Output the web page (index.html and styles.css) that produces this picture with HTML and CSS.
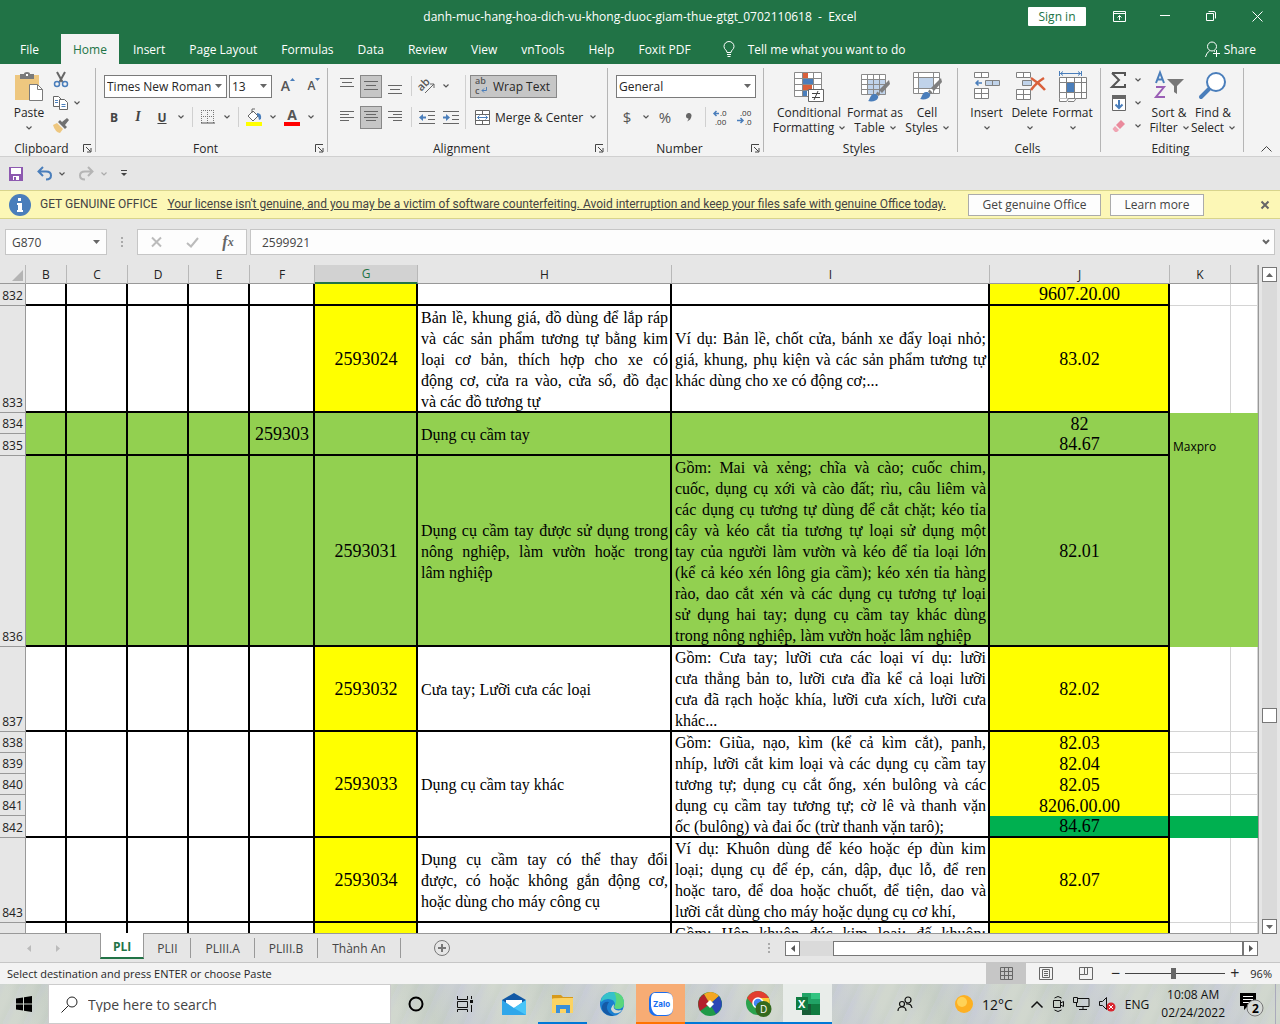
FILE: index.html
```html
<!DOCTYPE html>
<html lang="vi">
<head>
<meta charset="utf-8">
<title>danh-muc-hang-hoa-dich-vu-khong-duoc-giam-thue-gtgt_0702110618 - Excel</title>
<link rel="stylesheet" href="styles.css">
</head>
<body>
<svg class="defs" aria-hidden="true">
  <symbol id="chev" viewBox="0 0 6 4"><path d="M.5 .5 3 3 5.500 .5" fill="none" stroke="#555" stroke-width="1.200"/></symbol>
  <symbol id="tri" viewBox="0 0 7 4"><path d="M0 0H7L3.500 4z" fill="#666"/></symbol>
  <symbol id="launch" viewBox="0 0 9 9"><path d="M.5 8V.5H8M3 3l4.500 4.500M8 4V8H4" fill="none" stroke="#444"/></symbol>
  <symbol id="brush" viewBox="0 0 24 24"><path d="M22 1 12 11l3 3 8-9z" fill="#7f7f7f"/><path d="M10.500 12.500l3 3-2 1.500-2.500-2.500z" fill="#7f7f7f"/><path d="M1 22c2-1 2-7 6-7 3 0 5 2 4 4-1 3-6 4-10 3z" fill="#4a7ebb"/></symbol>
</svg>

<header class="titlebar">
  <span></span>
  <h1>danh-muc-hang-hoa-dich-vu-khong-duoc-giam-thue-gtgt_0702110618&nbsp; -&nbsp; Excel</h1>
  <div class="window-controls">
    <button class="signin">Sign in</button>
    <button class="win" aria-label="Ribbon display options"><svg width="13" height="11" fill="none" stroke="#fff"><path d="M.5 .5h12v10H.5zM.5 2.500h12M6.500 9V4.500M4.500 6.500l2-2 2 2"/></svg></button>
    <button class="win" aria-label="Minimize"><svg width="10" height="10" stroke="#fff"><path d="M0 4.500h10"/></svg></button>
    <button class="win" aria-label="Restore"><svg width="10" height="10" fill="none" stroke="#fff"><path d="M.5 2.500h7v7h-7zM2.500 .5h5.500q1.500 0 1.500 1.500V7.500"/></svg></button>
    <button class="win" aria-label="Close"><svg width="11" height="11" stroke="#fff"><path d="M.5 .5l10 10M10.500 .5l-10 10"/></svg></button>
  </div>
</header>

<nav class="menu">
  <a href="#file" class="file">File</a>
  <a href="#home" class="active">Home</a>
  <a href="#insert">Insert</a>
  <a href="#layout">Page Layout</a>
  <a href="#formulas">Formulas</a>
  <a href="#data">Data</a>
  <a href="#review">Review</a>
  <a href="#view">View</a>
  <a href="#vntools">vnTools</a>
  <a href="#help">Help</a>
  <a href="#foxit">Foxit PDF</a>
  <a href="#tell" class="tell"><svg width="12" height="17" fill="none" stroke="#fff"><path d="M4 11.500C4 9 1 8.500 1 5.500a5 5 0 0 1 10 0C11 8.500 8 9 8 11.500zM4 13.500h4M4.500 15.500h3"/></svg>Tell me what you want to do</a>
  <a href="#share" class="share"><svg width="15" height="16" fill="none" stroke="#fff"><circle cx="7" cy="5.500" r="4.500"/><path d="M.5 16q1-4.500 4-6M9 10l1 .5M8 12.500h7M11.500 9v7"/></svg>Share</a>
</nav>

<section class="ribbon">
  <div class="group g-clip">
    <div class="tools">
      <button class="big paste">
        <svg width="30" height="32"><rect x="1" y="4" width="24" height="25" fill="#eec77f"/><path d="M6 3h4q0-2 3-2t3 2h4v5H6z" fill="#7a7a7a"/><rect x="12" y="3" width="2" height="2" fill="#fff"/><path d="M15.500 13.500h8l5 5v11h-13z" fill="#fff" stroke="#7a7a7a"/><path d="M23.500 13.500v5h5" fill="none" stroke="#7a7a7a"/></svg>
        <span>Paste</span><svg class="chev"><use href="#chev"/></svg>
      </button>
      <div class="stack">
        <button class="tool" aria-label="Cut"><svg width="16" height="16" fill="none"><path d="M4 0l5.500 10M12 0L6.500 10" stroke="#666" stroke-width="2"/><circle cx="4" cy="12" r="2.500" stroke="#4a7ebb" stroke-width="1.500"/><circle cx="12" cy="12" r="2.500" stroke="#4a7ebb" stroke-width="1.500"/></svg></button>
        <div class="pair"><button class="tool" aria-label="Copy"><svg width="16" height="14" fill="#fff" stroke="#666"><path d="M.5 .5h5l3 3v7h-8z"/><path d="M6.500 3.500h5l3 3v7h-8z"/><path d="M2 4.500h3M2 6.500h3M8.500 8.500h4M8.500 10.500h4" stroke="#4a7ebb"/></svg></button><svg class="chev"><use href="#chev"/></svg></div>
        <button class="tool" aria-label="Format painter"><svg width="16" height="15"><path d="M0 7l4-2 6 6-3 4q-5-1-7-8z" fill="#eec77f"/><path d="M5 4l2-2 7 7-2 2zM9 4l5-4 2 2-4 5z" fill="#707070"/></svg></button>
      </div>
    </div>
    <div class="caption"><span>Clipboard</span><svg class="launch"><use href="#launch"/></svg></div>
  </div>

  <div class="group g-font">
    <div class="tools rows">
      <div class="row">
        <label class="combo w-font"><select aria-label="Font"><option>Times New Roman</option></select><svg class="tri"><use href="#tri"/></svg></label>
        <label class="combo w-size"><select aria-label="Font size"><option>13</option></select><svg class="tri"><use href="#tri"/></svg></label>
        <button class="tool grow-a" aria-label="Increase font size">A<svg width="5" height="3"><path d="M0 3L2.500 0 5 3z" fill="#4a7ebb"/></svg></button>
        <button class="tool shrink-a" aria-label="Decrease font size">A<svg width="5" height="3"><path d="M0 0L2.500 3 5 0z" fill="#4a7ebb"/></svg></button>
      </div>
      <div class="row">
        <button class="tool b">B</button><button class="tool i">I</button><button class="tool u">U</button><svg class="chev"><use href="#chev"/></svg>
        <i class="sep"></i>
        <button class="tool" aria-label="Borders"><svg width="14" height="14" fill="none" stroke="#777"><path d="M.5 0v13M6.500 0v13M12.500 0v13M0 .5h13M0 6.500h13" stroke-dasharray="1 1"/><path d="M0 13h14" stroke="#555"/></svg></button><svg class="chev"><use href="#chev"/></svg>
        <i class="sep"></i>
        <button class="tool" aria-label="Fill colour"><svg width="16" height="17"><path d="M2 7l5-5 5 5-5 5zM6 4V0h3" fill="#fff" stroke="#666"/><path d="M11 4q5 0 4 6l-2 1q0-3-2-5z" fill="#4a7ebb"/><path d="M0 13h16v4H0z" fill="#ff0"/></svg></button><svg class="chev"><use href="#chev"/></svg>
        <button class="tool fontcolor" aria-label="Font colour">A</button><svg class="chev"><use href="#chev"/></svg>
      </div>
    </div>
    <div class="caption"><span>Font</span><svg class="launch"><use href="#launch"/></svg></div>
  </div>

  <div class="group g-align">
    <div class="tools">
      <div class="rows">
        <div class="row">
          <button class="tool" aria-label="Top align"><svg width="14" height="16" stroke="#666"><path d="M0 .5h14M2 4.500h10M0 8.500h14"/></svg></button>
          <button class="tool on" aria-label="Middle align"><svg width="14" height="16" stroke="#666"><path d="M0 3.500h14M2 7.500h10M0 11.500h14"/></svg></button>
          <button class="tool" aria-label="Bottom align"><svg width="14" height="16" stroke="#666"><path d="M0 7.500h14M2 11.500h10M0 15.500h14"/></svg></button>
          <i class="sep"></i>
          <button class="tool" aria-label="Orientation"><svg width="18" height="16"><text x="0" y="10" transform="rotate(-45 6 8)" class="ab big-ab">ab</text><path d="M7 15l9-9M12 6h4v4" fill="none" stroke="#666"/></svg></button><svg class="chev"><use href="#chev"/></svg>
        </div>
        <div class="row">
          <button class="tool" aria-label="Align left"><svg width="14" height="12" stroke="#666"><path d="M0 .5h14M0 3.500h9M0 6.500h14M0 9.500h9"/></svg></button>
          <button class="tool on" aria-label="Center"><svg width="14" height="12" stroke="#666"><path d="M0 .5h14M2 3.500h10M0 6.500h14M2 9.500h10"/></svg></button>
          <button class="tool" aria-label="Align right"><svg width="14" height="12" stroke="#666"><path d="M0 .5h14M5 3.500h9M0 6.500h14M5 9.500h9"/></svg></button>
          <i class="sep"></i>
          <button class="tool" aria-label="Decrease indent"><svg width="16" height="13"><path d="M0 .5h16M9 4.500h7M9 8.500h7M0 12.500h16" stroke="#666"/><path d="M0 6.500L4 3v2.500h3v2H4V10z" fill="#4a7ebb"/></svg></button>
          <button class="tool" aria-label="Increase indent"><svg width="16" height="13"><path d="M0 .5h16M9 4.500h7M9 8.500h7M0 12.500h16" stroke="#666"/><path d="M7 6.500L3 3v2.500H0v2h3V10z" fill="#4a7ebb"/></svg></button>
        </div>
      </div>
      <i class="sep tall"></i>
      <div class="rows">
        <div class="row"><button class="wide on"><svg width="13" height="16"><text x="0" y="6" class="ab">ab</text><text x="0" y="16" class="ab">c</text><path d="M11.500 9v3.500H7M9 10.500l-2 2 2 2" fill="none" stroke="#4a7ebb"/></svg>Wrap Text</button></div>
        <div class="row"><button class="wide"><svg width="15" height="15" fill="#fff" stroke="#666"><path d="M.5 .5h14v14H.5zM.5 4.500h14M.5 10.500h14M7.500 .5v4M7.500 10.500v4"/><path d="M2.500 7.500h10M4.500 5.500l-2 2 2 2M10.500 5.500l2 2-2 2" stroke="#4a7ebb" fill="none"/></svg>Merge &amp; Center</button><svg class="chev"><use href="#chev"/></svg></div>
      </div>
    </div>
    <div class="caption"><span>Alignment</span><svg class="launch"><use href="#launch"/></svg></div>
  </div>

  <div class="group g-num">
    <div class="tools rows">
      <div class="row"><label class="combo w-num"><select aria-label="Number format"><option>General</option></select><svg class="tri"><use href="#tri"/></svg></label></div>
      <div class="row">
        <button class="tool sym">$</button><svg class="chev"><use href="#chev"/></svg>
        <button class="tool sym">%</button>
        <button class="tool comma" aria-label="Comma style"><svg width="6" height="9"><path d="M3 0a2.500 2.500 0 0 1 2.500 3Q5 7 1 8.500q1.500-1.500 1.500-3A2.500 2.500 0 0 1 3 0z" fill="#666"/></svg></button>
        <i class="sep"></i>
        <button class="tool" aria-label="Increase decimal"><svg width="16" height="14"><path d="M6 3.500H1M3.500 1L1 3.500 3.500 6" fill="none" stroke="#4a7ebb" stroke-width="1.500"/><text x="7" y="6" class="dec">.0</text><text x="2" y="15" class="dec">.00</text></svg></button>
        <button class="tool" aria-label="Decrease decimal"><svg width="16" height="14"><path d="M0 10.500h6M3.500 8L6 10.500 3.500 13" fill="none" stroke="#4a7ebb" stroke-width="1.500"/><text x="3" y="6" class="dec">.00</text><text x="8" y="15" class="dec">.0</text></svg></button>
      </div>
    </div>
    <div class="caption"><span>Number</span><svg class="launch"><use href="#launch"/></svg></div>
  </div>

  <div class="group g-styles">
    <div class="tools">
      <button class="big w-cf"><svg width="30" height="32"><path d="M.5 1.500h27v24H.5zM.5 7.500h27M.5 13.500h27M.5 19.500h27M8.500 1.500v24M19.500 1.500v24" fill="#fff" stroke="#8a8a8a"/><path d="M9 2h5v5H9zM9 14h9v5H9z" fill="#d9603b"/><path d="M9 8h10v5H9zM9 20h4v5H9z" fill="#4a7ebb"/><path d="M14.500 18.500h15v12h-15z" fill="#fff" stroke="#666"/><path d="M18 22.500h8M18 26.500h8M24 20l-4 9" stroke="#444"/></svg><span>Conditional</span><span>Formatting <svg class="chev"><use href="#chev"/></svg></span></button>
      <button class="big w-ft"><svg width="30" height="32"><path d="M1.500 3.500h24v20h-24z" fill="#fff"/><path d="M8 9h18v15H8z" fill="#c0d3ea"/><path d="M1.500 3.500h24v20h-24zM1.500 8.500h24M1.500 13.500h24M1.500 18.500h24M7.500 3.500v20M13.500 3.500v20M19.500 3.500v20" fill="none" stroke="#8a8a8a"/><use href="#brush" x="7" y="8" width="24" height="24"/></svg><span>Format as</span><span>Table <svg class="chev"><use href="#chev"/></svg></span></button>
      <button class="big w-cs"><svg width="30" height="32"><path d="M1.500 1.500h26v21h-26zM1.500 6.500h26M1.500 17.500h26M6.500 1.500v21M21.500 1.500v21" fill="#fff" stroke="#8a8a8a"/><path d="M7 7h14v10H7z" fill="#c0d3ea"/><use href="#brush" x="7" y="6" width="24" height="24"/></svg><span>Cell</span><span>Styles <svg class="chev"><use href="#chev"/></svg></span></button>
    </div>
    <div class="caption"><span>Styles</span></div>
  </div>

  <div class="group g-cells">
    <div class="tools">
      <button class="big"><svg width="28" height="32" fill="#fff" stroke="#808080"><path d="M1.500 1.500h14v5h-14zM8.500 1.500v5M1.500 17.500h14v10h-14zM1.500 22.500h14M8.500 17.500v10"/><path d="M12.500 9.500h14v5h-14zM19.500 9.500v5" fill="#c0d3ea"/><path d="M9 12H3M5.500 9.500L3 12l2.500 2.500" stroke="#4a7ebb" stroke-width="1.500" fill="none"/></svg><span>Insert</span><svg class="chev"><use href="#chev"/></svg></button>
      <button class="big"><svg width="30" height="32" fill="#fff" stroke="#808080"><path d="M1.500 1.500h14v5h-14zM8.500 1.500v5M1.500 18.500h14v10h-14zM1.500 23.500h14M8.500 18.500v10"/><path d="M7.500 9.500h9v5h-9z" fill="#c0d3ea"/><path d="M16 7q8 5 14 12M29 7q-8 5-13 12" stroke="#d9603b" stroke-width="2.500" fill="none"/></svg><span>Delete</span><svg class="chev"><use href="#chev"/></svg></button>
      <button class="big"><svg width="28" height="32" fill="#fff" stroke="#808080"><path d="M.5 0v5M22.500 0v5M1 2.500h21M4 .5l-2.500 2L4 4.500M19 .5l2.500 2-2.500 2" stroke="#4a7ebb" fill="none"/><path d="M.5 6.500h27v21H.5zM.5 11.500h27M.5 21.500h27M7.500 6.500v21M15.500 6.500v21M22.500 6.500v21"/><path d="M8 12h7v9H8z" fill="#4a7ebb" stroke="none"/><path d="M.5 27.500v3h7l2-3M9 30.500h6l2-3" /></svg><span>Format</span><svg class="chev"><use href="#chev"/></svg></button>
    </div>
    <div class="caption"><span>Cells</span></div>
  </div>

  <div class="group g-edit">
    <div class="tools">
      <div class="stack">
        <div class="pair"><button class="tool" aria-label="AutoSum"><svg width="16" height="16"><path d="M1 1h13v3M14 12v3H1l7-7-7-7" fill="none" stroke="#555" stroke-width="2"/></svg></button><svg class="chev"><use href="#chev"/></svg></div>
        <div class="pair"><button class="tool" aria-label="Fill"><svg width="15" height="16"><path d="M.5 .5h13v15H.5z" fill="#fff" stroke="#666"/><path d="M0 0h14v4H0z" fill="#666"/><path d="M7 5v8M3.500 9.500L7 13l3.500-3.500" fill="none" stroke="#4a7ebb" stroke-width="2"/></svg></button><svg class="chev"><use href="#chev"/></svg></div>
        <div class="pair"><button class="tool" aria-label="Clear"><svg width="14" height="14"><path d="M4 6l5-5 4 4-5 5z" fill="#ea8a9c"/><path d="M3 7l4 4-2 2H3L.5 10z" fill="#f0a5b3"/></svg></button><svg class="chev"><use href="#chev"/></svg></div>
      </div>
      <button class="big w-sort"><svg width="30" height="32"><path d="M2 12L6 1.500 10 12M3.500 8.500h5" fill="none" stroke="#4a7ebb" stroke-width="2"/><path d="M2 16h8L2 26h9" fill="none" stroke="#9a5fb5" stroke-width="2"/><path d="M13 8h17l-7 7v8l-3-2v-6z" fill="#777"/></svg><span>Sort &amp;</span><span>Filter <svg class="chev"><use href="#chev"/></svg></span></button>
      <button class="big w-find"><svg width="30" height="32"><path d="M12 17L3 26" stroke="#4a7ebb" stroke-width="4" stroke-linecap="round"/><circle cx="18" cy="11" r="9" fill="#fff" stroke="#4a7ebb" stroke-width="2"/></svg><span>Find &amp;</span><span>Select <svg class="chev"><use href="#chev"/></svg></span></button>
    </div>
    <div class="caption"><span>Editing</span></div>
  </div>
  <button class="collapse" aria-label="Collapse ribbon"><svg width="11" height="6"><path d="M.5 5.500l5-5 5 5" fill="none" stroke="#444"/></svg></button>
</section>

<div class="quick">
  <button aria-label="Save"><svg width="14" height="14"><path d="M0 0h14v14H0z" fill="#8d59b0"/><path d="M2 1h10v6H2zM4 9h6v4H4z" fill="#fff"/><path d="M5 10h2v3H5z" fill="#8d59b0"/></svg></button>
  <button aria-label="Undo"><svg width="15" height="13" fill="none" stroke="#4a7ebb" stroke-width="2"><path d="M6 0L1.500 4.500 6 9M2 4.500h7q5 0 5 4t-5 4"/></svg></button><svg class="chev"><use href="#chev"/></svg>
  <button aria-label="Redo"><svg width="15" height="13" fill="none" stroke="#b5b5b5" stroke-width="2"><path d="M9 0l4.500 4.500L9 9M13 4.500H6q-5 0-5 4t5 4"/></svg></button><svg class="chev dim"><use href="#chev"/></svg>
  <button aria-label="Customize"><svg width="6" height="7"><path d="M0 .5h6" stroke="#444"/><path d="M0 3h6L3 6z" fill="#444"/></svg></button>
</div>

<div class="notice">
  <svg width="22" height="22"><circle cx="11" cy="11" r="11" fill="#4a7ebb"/><path d="M9 9h4v7h1v2H8v-2h1v-5H8V9zM9 4h3v3H9z" fill="#fff"/></svg>
  <strong>GET GENUINE OFFICE</strong>
  <a href="#genuine">Your license isn't genuine, and you may be a victim of software counterfeiting. Avoid interruption and keep your files safe with genuine Office today.</a>
  <button class="get">Get genuine Office</button>
  <button class="learn">Learn more</button>
  <button class="dismiss" aria-label="Close message"><svg width="8" height="8" stroke="#666" stroke-width="2"><path d="M.5 .5l7 7M7.500 .5l-7 7"/></svg></button>
</div>

<div class="formula">
  <label class="name"><input value="G870" aria-label="Name box"><svg class="tri"><use href="#tri"/></svg></label>
  <svg class="grip" width="2" height="12"><path d="M1 1v10" stroke="#aaa" stroke-width="2" stroke-dasharray="2 2"/></svg>
  <div class="fx">
    <button aria-label="Cancel"><svg width="11" height="10" stroke="#bbb" stroke-width="2"><path d="M1 .5l9 9M10 .5l-9 9"/></svg></button>
    <button aria-label="Enter"><svg width="13" height="11" fill="none" stroke="#bbb" stroke-width="2"><path d="M1 6l4 3.500L12 1"/></svg></button>
    <button class="fn" aria-label="Insert function">f<small>x</small></button>
  </div>
  <label class="entry"><input value="2599921" aria-label="Formula"><svg width="8" height="6"><path d="M1 1l3 3 3-3" fill="none" stroke="#666" stroke-width="2"/></svg></label>
</div>

<main class="book">
  <div class="sheet">
    <table>
      <colgroup><col class="c-head"><col class="c-b"><col class="c-c"><col class="c-c"><col class="c-c"><col class="c-f"><col class="c-g"><col class="c-h"><col class="c-i"><col class="c-j"><col class="c-c"><col></colgroup>
      <thead><tr><th class="corner"><svg width="11" height="11"><path d="M11 0v11H0z" fill="#b4b4b4"/></svg></th><th>B</th><th>C</th><th>D</th><th>E</th><th>F</th><th class="sel">G</th><th>H</th><th>I</th><th>J</th><th>K</th><th></th></tr></thead>
      <tbody>
        <tr class="h22"><th>832</th><td></td><td></td><td></td><td></td><td></td><td class="y"></td><td></td><td></td><td class="y n">9607.20.00</td><td class="p"></td><td class="p"></td></tr>
        <tr class="h107"><th>833</th><td></td><td></td><td></td><td></td><td></td><td class="y n">2593024</td><td><span>Bản lề, khung giá, đồ dùng để lắp ráp </span><span>và các sản phẩm tương tự bằng kim </span><span>loại cơ bản, thích hợp cho xe có </span><span>động cơ, cửa ra vào, cửa sổ, đồ đạc </span><span>và các đồ tương tự</span></td><td><span>Ví dụ: Bản lề, chốt cửa, bánh xe đẩy loại nhỏ; </span><span>giá, khung, phụ kiện và các sản phẩm tương tự </span><span>khác dùng cho xe có động cơ;...</span></td><td class="y n">83.02</td><td class="p nb"></td><td class="p nb"></td></tr>
        <tr class="h21 green"><th>834</th><td rowspan="2"></td><td rowspan="2"></td><td rowspan="2"></td><td rowspan="2"></td><td rowspan="2" class="n">259303</td><td rowspan="2"></td><td rowspan="2"><span>Dụng cụ cầm tay</span></td><td rowspan="2"></td><td class="n nb">82</td><td class="f"></td><td class="f"></td></tr>
        <tr class="h22 green"><th>835</th><td class="n">84.67</td><td class="f ui">Maxpro</td><td class="f"></td></tr>
        <tr class="h191 green"><th>836</th><td></td><td></td><td></td><td></td><td></td><td class="n">2593031</td><td><span>Dụng cụ cầm tay được sử dụng trong </span><span>nông nghiệp, làm vườn hoặc trong </span><span>lâm nghiệp</span></td><td><span>Gồm: Mai và xẻng; chĩa và cào; cuốc chim, </span><span>cuốc, dụng cụ xới và cào đất; rìu, câu liêm và </span><span>các dụng cụ tương tự dùng để cắt chặt; kéo tỉa </span><span>cây và kéo cắt tỉa tương tự loại sử dụng một </span><span>tay của người làm vườn và kéo để tỉa loại lớn </span><span>(kể cả kéo xén lông gia cầm); kéo xén tỉa hàng </span><span>rào, dao cắt xén và các dụng cụ tương tự loại </span><span>sử dụng hai tay; dụng cụ cầm tay khác dùng </span><span>trong nông nghiệp, làm vườn hoặc lâm nghiệp</span></td><td class="n">82.01</td><td class="f"></td><td class="f"></td></tr>
        <tr class="h85"><th>837</th><td></td><td></td><td></td><td></td><td></td><td class="y n">2593032</td><td><span>Cưa tay; Lưỡi cưa các loại</span></td><td><span>Gồm: Cưa tay; lưỡi cưa các loại ví dụ: lưỡi </span><span>cưa thẳng bản to, lưỡi cưa đĩa kể cả loại lưỡi </span><span>cưa đã rạch hoặc khía, lưỡi cưa xích, lưỡi cưa </span><span>khác...</span></td><td class="y n">82.02</td><td class="p"></td><td class="p"></td></tr>
        <tr class="h21"><th>838</th><td rowspan="5"></td><td rowspan="5"></td><td rowspan="5"></td><td rowspan="5"></td><td rowspan="5"></td><td rowspan="5" class="y n">2593033</td><td rowspan="5"><span>Dụng cụ cầm tay khác</span></td><td rowspan="5"><span>Gồm: Giũa, nạo, kìm (kể cả kìm cắt), panh, </span><span>nhíp, lưỡi cắt kim loại và các dụng cụ cầm tay </span><span>tương tự; dụng cụ cắt ống, xén bulông và các </span><span>dụng cụ cầm tay tương tự; cờ lê và thanh vặn </span><span>ốc (bulông) và đai ốc (trừ thanh vặn tarô);</span></td><td class="y n nb">82.03</td><td class="p"></td><td class="p"></td></tr>
        <tr class="h21"><th>839</th><td class="y n nb">82.04</td><td class="p"></td><td class="p"></td></tr>
        <tr class="h21"><th>840</th><td class="y n nb">82.05</td><td class="p"></td><td class="p"></td></tr>
        <tr class="h21"><th>841</th><td class="y n nb">8206.00.00</td><td class="p nb"></td><td class="p nb"></td></tr>
        <tr class="h22 dark"><th>842</th><td class="n">84.67</td><td class="f"></td><td class="f"></td></tr>
        <tr class="h85"><th>843</th><td></td><td></td><td></td><td></td><td></td><td class="y n">2593034</td><td><span>Dụng cụ cầm tay có thể thay đổi </span><span>được, có hoặc không gắn động cơ, </span><span>hoặc dùng cho máy công cụ</span></td><td><span>Ví dụ: Khuôn dùng để kéo hoặc ép đùn kim </span><span>loại; dụng cụ để ép, cán, dập, đục lỗ, để ren </span><span>hoặc taro, để doa hoặc chuốt, để tiện, dao và </span><span>lưỡi cắt dùng cho máy hoặc dụng cụ cơ khí,</span></td><td class="y n">82.07</td><td class="p"></td><td class="p"></td></tr>
        <tr class="h22"><th></th><td></td><td></td><td></td><td></td><td></td><td class="y"></td><td></td><td class="spread">Gồm: Hộp khuôn đúc kim loại; đế khuôn;</td><td class="y"></td><td class="p"></td><td class="p"></td></tr>
      </tbody>
    </table>
  </div>
  <div class="vscroll">
    <button aria-label="Scroll up"><svg width="7" height="4"><path d="M0 4L3.500 0 7 4z" fill="#666"/></svg></button>
    <div class="track"><span class="thumb"></span></div>
    <button aria-label="Scroll down"><svg width="7" height="4"><path d="M0 0l3.500 4L7 0z" fill="#666"/></svg></button>
  </div>
</main>

<div class="sheets">
  <div class="arrows"><svg width="4" height="7"><path d="M4 0v7L0 3.500z" fill="#bbb"/></svg><svg width="4" height="7"><path d="M0 0v7l4-3.500z" fill="#bbb"/></svg></div>
  <nav class="tabs">
    <a href="#pli" class="current">PLI</a><a href="#plii">PLII</a><a href="#pliiia">PLIII.A</a><a href="#pliiib">PLIII.B</a><a href="#ta">Thành An</a>
  </nav>
  <button class="add" aria-label="New sheet"><svg width="16" height="16" fill="none" stroke="#777"><circle cx="8" cy="8" r="7.500"/><path d="M4 8h8M8 4v8" stroke-width="2"/></svg></button>
  <svg class="grip" width="2" height="12"><path d="M1 1v10" stroke="#aaa" stroke-width="2" stroke-dasharray="2 2"/></svg>
  <div class="hscroll">
    <button aria-label="Scroll left"><svg width="4" height="7"><path d="M4 0v7L0 3.500z" fill="#555"/></svg></button>
    <div class="track"><span class="thumb"></span></div>
    <button aria-label="Scroll right"><svg width="4" height="7"><path d="M0 0v7l4-3.500z" fill="#555"/></svg></button>
  </div>
</div>

<footer class="status">
  <span class="msg">Select destination and press ENTER or choose Paste</span>
  <button class="on" aria-label="Normal view"><svg width="13" height="13" fill="none" stroke="#666"><path d="M.5 .5h12v12H.5zM.5 4.500h12M.5 8.500h12M4.500 .5v12M8.500 .5v12"/></svg></button>
  <button aria-label="Page layout view"><svg width="14" height="13" fill="none" stroke="#666"><path d="M.5 .5h13v12H.5zM3.500 2.500h7v8h-7zM5 4.500h4M5 6.500h4M5 8.500h4"/></svg></button>
  <button aria-label="Page break view"><svg width="14" height="13" fill="none" stroke="#666"><path d="M.5 .5h13v12H.5zM5.500 .5v7h-5M8.500 .5v7h-3"/></svg></button>
  <div class="zoom"><span>−</span><input type="range" min="0" max="100" value="48" aria-label="Zoom"><span>+</span></div>
  <output>96%</output>
</footer>

<div class="taskbar">
  <button class="start" aria-label="Start"><svg width="16" height="16"><path d="M0 2.500l7-1v6H0zM8 1.300L16 0v7.500H8zM0 8.500h7v6l-7-1zM8 8.500h8V16l-8-1.300z"/></svg></button>
  <label class="search"><svg width="17" height="17" fill="none" stroke="#222"><circle cx="11" cy="6" r="5"/><path d="M7.500 9.500L.5 16.500"/></svg><input placeholder="Type here to search" aria-label="Search"></label>
  <div class="apps">
    <button aria-label="Cortana"><svg width="16" height="16"><circle cx="8" cy="8" r="6.500" fill="none" stroke="#000" stroke-width="2"/></svg></button>
    <button aria-label="Task view"><svg width="16" height="16" fill="none" stroke="#111"><path d="M.5 0v3.500h10V0M.5 5.500h10v6H.5zM.5 16v-2.500h10V16M14.500 0v3M14.500 9v7"/><path d="M13 4h3v3h-3z" fill="#111" stroke="none"/></svg></button>
    <button aria-label="Mail"><svg width="24" height="24"><path d="M0 8L12 1l12 7v4H0z" fill="#1259a5"/><path d="M4 8h16v8H4z" fill="#fff"/><path d="M0 8l12 8L24 8v15H0z" fill="#2fa7ea"/><path d="M24 8v15L12 16z" fill="#49c5f8"/></svg></button>
    <button class="run" aria-label="File Explorer"><svg width="22" height="20"><path d="M0 1h9l2 2h10v16H0z" fill="#d79a1b"/><path d="M0 5q0-1 10-1h11v15H0z" fill="#fcd363"/><path d="M4 19v-8h14v8h-4v-4H8v4z" fill="#3a8fd9"/></svg></button>
    <button aria-label="Edge"><svg width="24" height="24"><circle cx="12" cy="12" r="12" fill="#1b7fd0"/><path d="M1 8Q4 0 12 0q11 0 12 11 0 6-7 6-4-1-2-4 0-6-7-6-4 0-7 3z" fill="#36c2c9"/><path d="M14 0q10 2 10 11 0 6-7 6-4-1-2-4 3-5-1-13z" fill="#5bd67c"/><path d="M9 10q-6 8 5 14-13-1-12-10 2-5 7-4z" fill="#155aa6"/><path d="M14 12q-2 8 8 6-3 4-8 3-6-4 0-9z" fill="#cfd6d2"/></svg></button>
    <button class="alert" aria-label="Zalo"><svg width="24" height="24"><rect width="24" height="24" rx="7" fill="#1a6ef0"/><path d="M5 1h13q6 0 6 7v8q0 7-7 7H8Q3 21 2 14V7q0-5 3-6z" fill="#fff"/><text x="4" y="15" class="zalo">Zalo</text></svg></button>
    <button class="run" aria-label="Viewer"><svg width="24" height="24"><circle cx="12" cy="12" r="12" fill="#1f9a48"/><path d="M12 12L2 19Q-3 8 6 2z" fill="#b3202c"/><path d="M12 12L6 2q8-5 15 2z" fill="#f5a623"/><path d="M12 12l9-8q7 10-3 18z" fill="#2b46b5"/><path d="M12 8l4 4-4 4-4-4z" fill="#fff"/></svg></button>
    <button class="run" aria-label="Chrome"><svg width="26" height="26"><circle cx="12" cy="12" r="12" fill="#2ba24c"/><path d="M1 7Q5 0 12 0t11 7H12l-4 8z" fill="#e23e31"/><path d="M23 7q3 10-5 16l-6-6 3-10z" fill="#fcc934"/><circle cx="12" cy="12" r="5" fill="#4285f4" stroke="#fff" stroke-width="1.500"/><circle cx="17.500" cy="18" r="8" fill="#33691e"/><text x="14" y="22" class="dot">D</text></svg></button>
    <button class="run open" aria-label="Excel"><svg width="24" height="22"><path d="M6 0h18v22H6z" fill="#21a366"/><path d="M15 0h9v6h-9z" fill="#33c481"/><path d="M15 11h9v11H6v-5h9z" fill="#107c41"/><path d="M6 11h9v11H6z" fill="#185c37"/><path d="M0 4h12v13H0z" fill="#107c41"/><text x="2" y="15" class="xl">X</text></svg></button>
  </div>
  <div class="tray">
    <svg class="people" width="16" height="16" fill="none" stroke="#111" stroke-width="1.200"><circle cx="11" cy="4" r="3"/><circle cx="5" cy="8" r="2.500"/><path d="M1 15q0-4 4-4t4 4M9 8q5-1 6 4"/></svg>
    <svg width="18" height="18"><circle cx="9" cy="9" r="9" fill="#fdb022"/><circle cx="7" cy="7" r="5" fill="#ffd257"/></svg>
    <span class="temp">12°C</span>
    <svg width="12" height="7"><path d="M.5 6.500l5.500-5.500 5.500 5.500" fill="none" stroke="#111" stroke-width="1.500"/></svg>
    <svg width="12" height="16" fill="none" stroke="#111"><path d="M2.500 2Q6-1 9.500 2M2.500 14q3.500 3 7 0M1.500 4.500h7v7h-7zM8.500 7l3-1.500v5L8.500 9"/></svg>
    <svg width="17" height="14" fill="none" stroke="#111"><path d="M5 1.500h11v8H3.500V6M10 9.500v3M6 12.500h8M.5 .5h4v5h-4z"/></svg>
    <svg width="17" height="16"><path d="M.5 5.500h3l4-4v12l-4-4h-3z" fill="none" stroke="#111"/><circle cx="12" cy="11" r="4.500" fill="#d9252f"/><path d="M10 9l4 4M14 9l-4 4" stroke="#fff"/></svg>
    <span>ENG</span>
    <time>10:08 AM<br>02/24/2022</time>
    <svg class="note" width="24" height="24"><path d="M0 1h16v13H8l-4 4v-4H0z"/><path d="M3 4.500h10M3 7.500h10M3 10.500h6" stroke="#fff"/><circle cx="15" cy="16" r="8" fill="#d5d9d6" stroke="#777"/><text x="12" y="21" class="count">2</text></svg>
  </div>
</div>
</body>
</html>
```
FILE: styles.css
```css
* { box-sizing: border-box; }
body {
  margin: 0;
  height: 100vh;
  display: flex;
  flex-direction: column;
  overflow: hidden;
  background: #e6e6e6;
  color: #262626;
  font: 12px/15px "Open Sans", "Noto Sans", sans-serif;
}
.defs { position: absolute; width: 0; height: 0; }
button, input, select { font: inherit; color: inherit; margin: 0; padding: 0; border: 0; background: none; }
button { display: flex; align-items: center; justify-content: center; flex: none; white-space: nowrap; }
a { color: inherit; text-decoration: none; white-space: nowrap; }
svg { flex: none; display: block; overflow: visible; }
.chev { width: 6px; height: 4px; }
.dim { opacity: .4; }
.tri { width: 7px; height: 4px; }

/* Title and menu */
.titlebar { flex: none; display: grid; grid-template-columns: 1fr auto 1fr; height: 32px; background: #217346; color: #fff; align-items: center; }
.titlebar h1 { margin: 0; font-size: 12px; font-weight: 400; }
.window-controls { display: flex; justify-content: flex-end; align-items: center; }
.signin { width: 58px; height: 19px; margin-right: 10px; background: #fff; color: #217346; border-radius: 1px; }
.win { width: 46px; height: 30px; }
.menu { flex: none; display: flex; height: 32px; padding: 2px 24px 0 0; background: #217346; color: #fff; }
.menu a { display: flex; align-items: center; padding: 0 12px; }
.menu .file { padding: 0 22px 0 20px; }
.menu .active { margin-right: 2px; background: #f3f3f3; color: #217346; }
.menu .tell { gap: 13px; padding: 0 20px; }
.menu .share { margin-left: auto; padding: 0; gap: 4px; }

/* Ribbon */
.ribbon { flex: none; display: flex; height: 93px; padding: 4px 0; background: #f3f3f3; border-bottom: 1px solid #d0d0d0; }
.group { flex: none; display: flex; flex-direction: column; border-right: 1px solid #b5b5b5; }
.tools { flex: none; display: flex; height: 72px; }
.rows { display: flex; flex-direction: column; gap: 7px; padding-top: 6px; }
.row { display: flex; align-items: center; height: 24px; }
.caption { flex: none; display: flex; align-items: center; height: 16px; padding-right: 3px; }
.caption span { flex: 1; text-align: center; }
.launch { width: 9px; height: 9px; }
.tool { width: 24px; height: 23px; }
.on { background: #c6c6c6; outline: 1px solid #888; outline-offset: -1px; }
.tool.on { width: 22px; margin: 0 1px; }
.row .chev, .pair .chev { margin: 0 4px; }
.sep { width: 1px; height: 20px; margin: 0 3px 0 4px; background: #d0d0d0; }
.sep.tall { height: 54px; margin: 7px 4px 0 2px; }
.big { flex-direction: column; justify-content: flex-start; padding-top: 3px; height: 72px; }
.big > svg:first-child { margin-bottom: 2px; }
.big > .chev { margin-top: 6px; }
.big span { display: flex; align-items: center; gap: 5px; height: 15px; }
.stack { display: flex; flex-direction: column; }
.pair { display: flex; align-items: center; }
.g-clip { width: 96px; }
.g-font { width: 232px; }
.g-font .tools { padding-left: 8px; }
.g-align { width: 280px; }
.g-align .tools { padding-left: 7px; }
.g-num { width: 156px; }
.g-num .tools { padding-left: 7px; }
.g-styles { width: 194px; }
.g-cells { width: 143px; }
.g-edit { width: 143px; }
.paste { width: 46px; margin-left: 6px; }
.g-clip .tool { width: 18px; }
.combo { display: grid; align-items: center; height: 23px; margin-right: 2px; background: #fff; border: 1px solid #7a7a7a; }
.combo > *, .name > *, .entry > * { grid-area: 1 / 1; }
.combo select { appearance: none; width: 100%; padding-left: 2px; }
.combo .tri { justify-self: end; margin-right: 4px; pointer-events: none; }
.w-font { width: 123px; }
.w-size { width: 43px; }
.w-num { width: 140px; margin-left: 1px; }
.grow-a, .shrink-a { align-items: flex-start; padding-top: 3px; font-weight: 600; color: #555; }
.grow-a { font-size: 14px; width: 28px; }
.g-font .b { font-weight: 700; margin-left: -2px; color: #444; }
.i { font: italic bold 14px "Liberation Serif", serif; color: #444; }
.u { font-weight: 700; text-decoration: underline; color: #444; }
.fontcolor { width: 16px; height: 18px; margin: 0 4px; border-bottom: 4px solid red; font-weight: 700; font-size: 14px; color: #555; line-height: 14px; }
.wide { height: 23px; padding: 0 7px 0 5px; gap: 5px; }
.wide + .chev { margin: 0; }
.sym { font-size: 15px; color: #555; }
.ab { font: 600 9px "Open Sans", sans-serif; fill: #555; }
.big-ab { font-size: 11px; }
.dec { font: 8px "Open Sans", sans-serif; fill: #333; }
.w-cf { width: 78px; margin-left: 6px; }
.w-ft { width: 54px; }
.w-cs { width: 50px; }
.g-cells .big { width: 43px; }
.g-cells .tools { padding-left: 7px; }
.g-edit .stack { margin-left: 6px; }
.w-sort { width: 44px; margin-left: 2px; }
.w-find { width: 44px; }
.collapse { align-self: flex-end; margin: 0 8px 0 auto; }

/* Quick access */
.quick { flex: none; display: flex; align-items: center; height: 33px; padding-left: 9px; gap: 7px; }
.quick button:nth-of-type(n+2) { margin-left: 7px; }

/* Licence notice */
.notice { flex: none; display: flex; align-items: center; height: 29px; padding: 0 11px 0 9px; background: #fcf7b6; border: solid #d8d48c; border-width: 1px 0; color: #444; }
.notice strong { font-weight: 400; font-family: Roboto, sans-serif; margin: 0 10px 0 9px; white-space: nowrap; }
.notice a { flex: none; font-family: Roboto, sans-serif; text-decoration: underline; }
.notice .get, .notice .learn { height: 22px; background: #fdfdfd; border: 1px solid #ababab; }
.notice .get { width: 133px; margin-left: auto; }
.notice .learn { width: 94px; margin: 0 57px 0 9px; }

/* Formula bar */
.formula { flex: none; display: flex; align-items: center; height: 46px; padding: 0 5px; color: #444; }
.name, .fx, .entry { height: 26px; background: #fdfdfd; border: 1px solid #c6c6c6; }
.name, .entry { display: grid; align-items: center; }
.name { width: 102px; }
.name input { width: 100%; padding-left: 6px; }
.name .tri { justify-self: end; margin-right: 6px; }
.formula .grip { margin: 0 14px; }
.fx { display: flex; width: 110px; margin-right: 3px; }
.fx button { flex: 1; }
.fn { font: italic bold 16px "Liberation Serif", serif; color: #666; }
.fn small { font-size: 12px; }
.entry { flex: 1; }
.entry input { width: 100%; padding-left: 11px; }
.entry svg { justify-self: end; margin-right: 4px; }

/* Worksheet */
.book { flex: 1; min-height: 0; display: flex; }
.sheet { flex: 1; min-width: 0; overflow: hidden; background: #fff; border: solid #999; border-width: 0 1px 1px 0; }
table { width: 100%; table-layout: fixed; border-collapse: separate; border-spacing: 0; }
.c-head { width: 26px; }
.c-b { width: 41px; }
.c-c { width: 61px; }
.c-f { width: 65px; }
.c-g { width: 103px; }
.c-h { width: 254px; }
.c-i { width: 318px; }
.c-j { width: 180px; }
th { padding: 0 1px; background: #e6e6e6; border: solid #999; border-width: 0 1px 1px 0; font-weight: 400; color: #222; }
thead th { height: 19px; border-right-color: #b8b8b8; }
.corner svg { margin: 3px 0 0 11px; }
.sel { background: #d2d2d2; color: #217346; border-bottom: 2px solid #217346; }
tbody th { padding-bottom: 2px; vertical-align: bottom; }
td { padding: 0 2px 0 3px; border: solid #000; border-width: 0 2px 2px 0; font: 16px/21px "Liberation Serif", "Times New Roman", serif; color: #000; vertical-align: middle; }
td span { display: block; height: 21px; white-space: nowrap; text-align-last: justify; }
td span:last-child { height: 20px; text-align-last: left; }
td.n { text-align: center; font-size: 18px; line-height: 20px; }
td.y { background: #ff0; }
td.nb { border-bottom-width: 0; }
td.p { border: solid #d4d4d4; border-width: 0 1px 1px 0; }
td.p.nb { border-bottom: 0; }
td.f { border: 0; }
td.ui { padding-bottom: 2px; font: 12px/15px "Open Sans", sans-serif; vertical-align: bottom; }
td.spread { text-align-last: justify; white-space: nowrap; }
.green td { background: #92d050; }
.dark .n, .dark .f { background: #00b050; }
.h21 { height: 21px; }
.h22 { height: 22px; }
.h85 { height: 85px; }
.h107 { height: 107px; }
.h191 { height: 191px; }

/* Scroll bars */
.vscroll { flex: none; display: flex; flex-direction: column; width: 21px; padding: 2px 3px 0; }
.vscroll button, .hscroll button, .thumb { width: 15px; height: 15px; background: #fff; border: 1px solid #777; }
.track { flex: 1; display: flex; background: #dadada; }
.vscroll .track { padding-top: 426px; }

/* Sheet tabs */
.sheets { flex: none; display: flex; align-items: center; height: 28px; padding-right: 22px; color: #444; }
.arrows { display: flex; width: 100px; padding-left: 27px; gap: 25px; }
.tabs { display: flex; align-self: flex-start; height: 25px; font-size: 12px; }
.tabs a { display: flex; align-items: center; padding: 0 14px; margin: 4px 0 1px; border-right: 1px solid #999; }
.tabs .current { margin: -1px 0 0; padding: 3px 12px 0; background: #fff; border: solid #999; border-width: 0 1px; border-bottom: 2px solid #217346; color: #217346; font-weight: 700; }
.tabs .current + a { padding: 0 13px; }
.add { margin-left: 33px; }
.sheets .grip { margin: 0 15px 0 auto; }
.hscroll { display: flex; width: 40%; max-width: 473px; }
.hscroll .track { padding-left: 7%; }
.hscroll .thumb { flex: 1; }

/* Status bar */
.status { flex: none; display: flex; align-items: center; height: 22px; padding-right: 8px; background: #f3f3f3; border-top: 1px solid #c6c6c6; font-size: 11px; }
.msg { flex: 1; padding-left: 7px; }
.status button { width: 40px; height: 21px; }
.status .on { outline: 0; }
.zoom { display: flex; align-items: center; gap: 5px; margin: 0 11px 0 5px; font-size: 16px; }
.zoom input { appearance: none; width: 100px; height: 11px; background: linear-gradient(#444, #444) center / 100% 1px no-repeat; }
.zoom input::-webkit-slider-thumb { appearance: none; width: 5px; height: 11px; background: #666; }

/* Taskbar */
.taskbar {
  flex: none;
  display: flex;
  height: 40px;
  color: #111;
  background:
    repeating-linear-gradient(115deg, #b9bdd622 0 3px, #cbd3c422 7px 12px, #aebcae22 17px 19px),
    repeating-linear-gradient(67deg, #d2d8d0 0 19px, #c8d0c8 51px, #cbcfd6 84px, #d2d8d0 117px);
}
.start { width: 48px; }
.search { display: flex; align-items: center; gap: 10px; width: 343px; padding-left: 12px; background: #fff; border: 1px solid #ccc; }
.search input { flex: 1; min-width: 0; font-size: 14px; }
.search input::placeholder { color: #444; opacity: 1; }
.apps { display: flex; }
.apps button { width: 49px; border: solid transparent; border-width: 2px 0; }
.apps .run { border-bottom-color: #0078d7; }
.apps .alert { background: #f7ac74; border-bottom-color: #ff7300; }
.apps .open { background: #e9edea; }
.zalo { font: bold 8px Inter, sans-serif; fill: #1a6ef0; }
.dot { font: 10px "Open Sans", sans-serif; fill: #fff; }
.xl { font: bold 11px "Open Sans", sans-serif; fill: #fff; }
.count { font: bold 12px "Open Sans", sans-serif; }
.tray { display: flex; align-items: center; margin: 0 4px 0 auto; padding-right: 11px; gap: 9px; border-right: 1px solid #aab; }
.people { margin-right: 33px; }
.temp { font-size: 14px; margin-right: 9px; }
time { margin-left: 3px; text-align: center; line-height: 18px; }
.note { margin-left: 6px; }
```
